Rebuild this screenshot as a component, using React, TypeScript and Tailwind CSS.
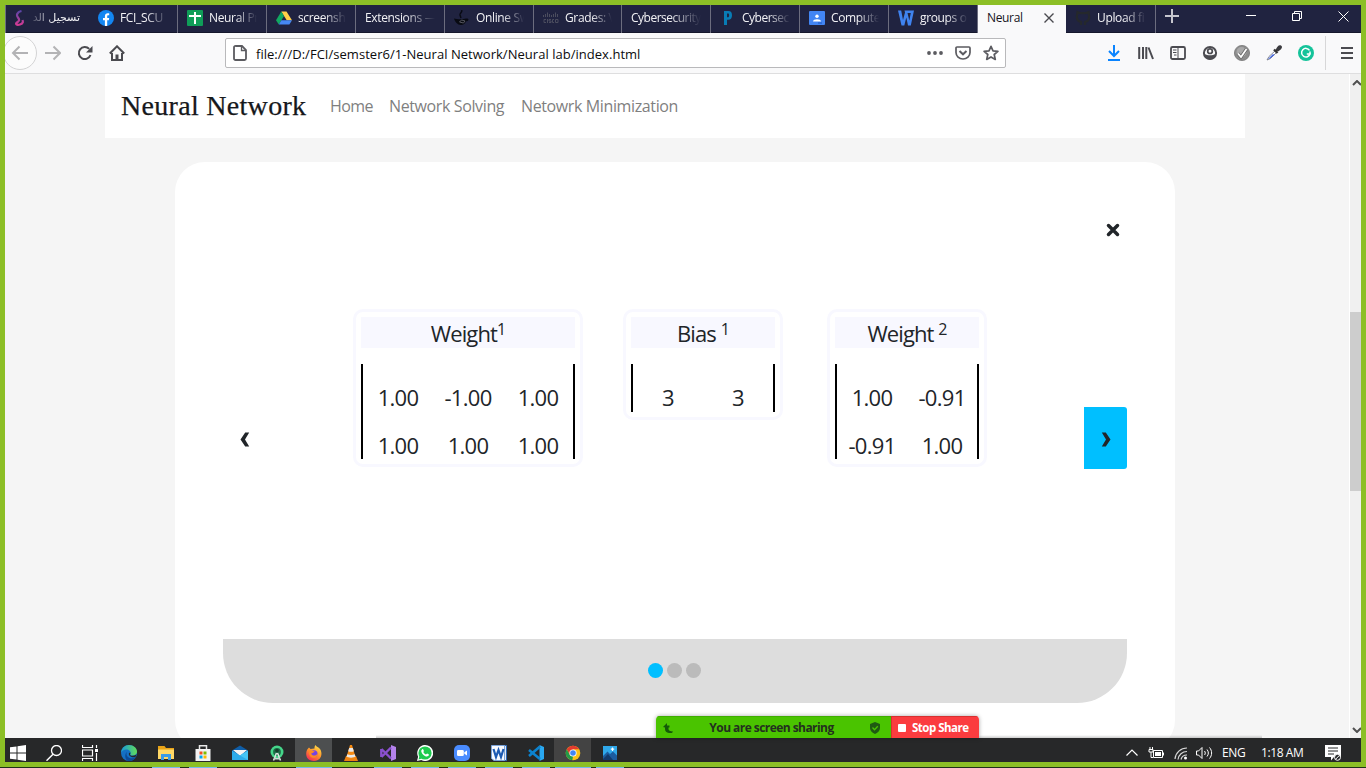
import React from "react";

type Kids = { children?: React.ReactNode };

function Svg({ children, size = 16, box = "0 0 16 16" }: Kids & { size?: number; box?: string }) {
  return (
    <svg width={size} height={size} viewBox={box} fill="none" className="block shrink-0">
      {children}
    </svg>
  );
}

/* ---------- tab strip ---------- */

const tabIcons: Record<string, React.ReactNode> = {
  facebook: (
    <Svg>
      <circle cx="8" cy="8" r="8" fill="#1386f2" />
      <path d="M6.9 16V10.3H5V8h1.9V6.3c0-2 1.1-3 2.8-3 .8 0 1.5.1 1.5.1v1.9h-.9c-.9 0-1.1.5-1.1 1.1V8h2l-.4 2.3H9.2V16z" fill="#fff" />
    </Svg>
  ),
  sheets: (
    <Svg>
      <rect width="16" height="16" rx="1" fill="#0f9d58" />
      <path d="M7 2h2v3h5v2H9v7H7V7H2V5h5z" fill="#fff" />
    </Svg>
  ),
  drive: (
    <Svg>
      <path d="M5.3 1.5h5.2L16 10.3h-5.3z" fill="#ffcf48" />
      <path d="M5.3 1.5 8 6 2.8 14.5 0 10.3z" fill="#11a861" />
      <path d="M5.4 10.3H16l-2.6 4.2H2.8z" fill="#4688f4" />
    </Svg>
  ),
  java: (
    <Svg>
      <path d="M7.500 0c1.500 2-2 3-1.500 5l1 3" stroke="#080a12" strokeWidth="1.400" />
      <path d="M0 8.500c3 1 9 1 12 0 3.500-.5 3 2.500 0 3-1 2-2.500 3.500-5 3.500-3.500 0-6-3-7-6.500z" fill="#080a12" />
      <path d="M5.500 12 7.500 10l3.500 1-1.500 2z" stroke="#5c5d66" strokeWidth=".9" />
    </Svg>
  ),
  cisco: (
    <Svg>
      <path d="M.5 5v2M2.500 4v3M4.500 2.500V7M6.500 4v3M8.500 5v2M10.500 4v3M12.500 2.500V7M14.500 4v3" stroke="#4b4d5e" strokeWidth="1" />
      <path d="M3 9.500H1v3h2M4.500 9v4M8 9.500H6v1.500h2v1.500H6M11 9.500H9.500v3H11M12.500 9.500h2.500v3h-2.500z" stroke="#4b4d5e" strokeWidth="1" />
    </Svg>
  ),
  packet: (
    <Svg>
      <path d="M4 15V1h4.200C11 1 12 2.600 12 5.200S11 9.700 8.200 9.700H7V15zM7 3.500v3.800h.9c.8 0 1.200-.5 1.200-2s-.4-1.800-1.200-1.800z" fill="#087cb5" />
    </Svg>
  ),
  classroom: (
    <Svg>
      <rect y="1" width="16" height="14" rx="1" fill="#4285f4" />
      <circle cx="8" cy="6.300" r="1.700" fill="#fff" />
      <path d="M4 11.500c0-3 8-3 8 0z" fill="#fff" />
      <path d="M9 13h4" stroke="#1a56c0" strokeWidth="1" />
    </Svg>
  ),
  word: (
    <Svg>
      <path d="M0 .5h3.200L5 10 7 2.500 6.500.500H16L12.800 15.500h-2.800L8.300 7.500 6.300 15.500H3.500zM9.500 3l1.800 7.500L12.800 3z" fill="#3f83f0" />
    </Svg>
  ),
  github: (
    <Svg>
      <path d="M6 15v-3C2 11 1.500 8 2 5.500L2.500 2l3 1.200h5l3-1.200.5 3.500c.5 2.500 0 5.500-4 6.500v3" stroke="#25282c" strokeWidth="2.200" />
    </Svg>
  ),
};

function Tab({ label, icon, width = "w-[89px]", tracking = "tracking-[-0.35px]" }: { label: string; icon?: string; width?: string; tracking?: string }) {
  return (
    <div className={`flex h-7 shrink-0 items-center gap-1.5 border-r border-[#6c6d7e] pb-[3px] pl-[9px] pr-[9px] ${width}`}>
      {icon && tabIcons[icon]}
      <span
        className={`min-w-0 flex-1 whitespace-nowrap text-[12px] leading-5 text-[#f2f2f5] [mask-image:linear-gradient(to_right,black_55%,transparent)] ${tracking}`}
      >
        {label}
      </span>
    </div>
  );
}

function TabStrip() {
  return (
    <div className="flex h-7 bg-[#202340] shadow-[inset_0_-1px_0_#15172c]">
      <div dir="rtl" className="flex h-7 w-[84px] shrink-0 items-center border-l border-[#6c6d7e] pb-[3px] pr-[9px]">
        <span className="w-[52px] whitespace-nowrap font-['DejaVu_Sans'] text-[11px] leading-5 text-[#f2f2f5] [mask-image:linear-gradient(to_left,black_50%,transparent)]">
          تسجيل الد
        </span>
        <svg width="12" height="16" viewBox="0 0 12 16" fill="none" className="mr-[3px]">
          <defs>
            <linearGradient id="swirl" x1="0" y1="0" x2="0" y2="1">
              <stop stopColor="#5b45a8" />
              <stop offset="1" stopColor="#d43a93" />
            </linearGradient>
          </defs>
          <path d="M8.500 1C4 2 3 5 5 7.500S6 11 4 12.500 3.500 15.500 7 14.500s3-3 2.500-4.500" stroke="url(#swirl)" strokeWidth="2.200" />
        </svg>
      </div>
      <Tab label="FCI_SCU" icon="facebook" />
      <Tab label="Neural Pr" icon="sheets" />
      <Tab label="screensh" icon="drive" />
      <Tab label="Extensions —" />
      <Tab label="Online Sw" icon="java" />
      <Tab label="Grades: V" icon="cisco" width="w-[88px]" />
      <Tab label="Cybersecurity" tracking="tracking-[-0.5px]" />
      <Tab label="Cybersec" icon="packet" tracking="tracking-[-0.5px]" />
      <Tab label="Compute" icon="classroom" />
      <Tab label="groups o" icon="word" />
      <div className="flex h-7 w-[88px] shrink-0 items-center justify-between bg-[#f9f9fa] pb-[3px] pl-[9px] pr-3">
        <span className="text-[12px] leading-5 tracking-[-0.35px] text-[#15151c]">Neural</span>
        <svg width="10" height="10" viewBox="0 0 10 10" stroke="#4a4a4f" strokeWidth="1.400">
          <path d="M.5.500l9 9M9.500.500l-9 9" />
        </svg>
      </div>
      <Tab label="Upload fi" icon="github" width="w-[90px]" />
      <div className="flex h-[22px] flex-1 items-center justify-between pl-[9px] pr-[12px]">
        <svg width="14" height="14" viewBox="0 0 14 14" stroke="#c6c6ce" strokeWidth="2">
          <path d="M7 0v14M0 7h14" />
        </svg>
        <div className="flex items-center gap-9">
          <svg width="10" height="10" viewBox="0 0 10 10" stroke="#fff">
            <path d="M0 4.500h10" />
          </svg>
          <svg width="10" height="10" viewBox="0 0 10 10" stroke="#fff" fill="none">
            <path d="M.5 2.500h7v7h-7zM2.500 2.500v-2h7v7h-2" />
          </svg>
          <svg width="11" height="11" viewBox="0 0 11 11" stroke="#fff">
            <path d="M.5.500l10 10M10.500.500l-10 10" />
          </svg>
        </div>
      </div>
    </div>
  );
}

/* ---------- toolbar ---------- */

function Cell({ children, w = "w-8" }: Kids & { w?: string }) {
  return <div className={`flex h-full shrink-0 items-center justify-center ${w}`}>{children}</div>;
}

function Toolbar() {
  return (
    <div className="flex h-[41px] items-center border-b border-[#dededf] bg-[#f9f9fa]">
      <div className="flex h-10 w-8 shrink-0 items-center overflow-hidden">
        <svg width="32" height="36" viewBox="0 0 32 36" fill="none">
          <circle cx="15" cy="18" r="16.500" fill="#fcfcfc" stroke="#d3d3d4" />
          <path d="M23 18H8M14.500 11.500 8 18l6.500 6.500" stroke="#b3b3b5" strokeWidth="2" />
        </svg>
      </div>
      <Cell>
        <Svg>
          <path d="M0 8h15M8.500 1.500 15 8l-6.500 6.500" stroke="#b3b3b5" strokeWidth="2" />
        </Svg>
      </Cell>
      <Cell>
        <Svg>
          <path d="M13.500 10A6 6 0 1 1 12.200 3.900" stroke="#4b4b50" strokeWidth="2" />
          <path d="M15.500 1v6.500H9z" fill="#4b4b50" />
        </Svg>
      </Cell>
      <Cell>
        <Svg>
          <path d="M.8 8.500 8 1.300l7.200 7.200" stroke="#4b4b50" strokeWidth="2" />
          <path d="M3 8v7h10V8" stroke="#4b4b50" strokeWidth="2" />
          <path d="M6.500 15V9.500h3V15z" fill="#4b4b50" />
        </Svg>
      </Cell>
      <div className="ml-[92px] flex h-[30px] w-[781px] shrink-0 items-center rounded-[2px] border border-[#b9b9bb] bg-white">
        <div className="flex w-[30px] justify-center pr-0.5">
          <svg width="14" height="16" viewBox="0 0 14 16" fill="none" stroke="#5b5b60" strokeWidth="1.800">
            <path d="M3 1h6l4 4v8.500a1.500 1.500 0 0 1-1.500 1.500h-9A1.500 1.500 0 0 1 1 13.500V2.500A1.500 1.500 0 0 1 3 1z" />
            <path d="M8.500 1v4.500H13" strokeWidth="1.300" />
          </svg>
        </div>
        <span className="flex-1 whitespace-nowrap pt-[3px] text-[13px] tracking-[0.03px] text-[#0c0c0d]">
          file:///D:/FCI/semster6/1-Neural Network/Neural lab/index.html
        </span>
        <Cell w="w-7">
          <Svg>
            <g fill="#5b5b60">
              <circle cx="2" cy="8" r="1.900" />
              <circle cx="8" cy="8" r="1.900" />
              <circle cx="14" cy="8" r="1.900" />
            </g>
          </Svg>
        </Cell>
        <Cell w="w-7">
          <Svg>
            <path d="M2 2h12a1 1 0 0 1 1 1v4.500a7 6.500 0 0 1-14 0V3a1 1 0 0 1 1-1z" stroke="#5b5b60" strokeWidth="1.700" />
            <path d="M4.500 6 8 9.300 11.500 6" stroke="#5b5b60" strokeWidth="2" />
          </Svg>
        </Cell>
        <Cell w="w-7">
          <Svg>
            <path d="M8 1.300l2 4.500 4.900.5-3.700 3.200 1.100 4.900L8 11.900l-4.300 2.500 1.100-4.900L1.100 6.300 6 5.800z" stroke="#5b5b60" strokeWidth="1.700" strokeLinejoin="round" />
          </Svg>
        </Cell>
      </div>
      <div className="ml-[92px] flex h-full items-center">
        <Cell>
          <Svg>
            <path d="M8 0v11M3 6l5 5 5-5M2 15h12" stroke="#0a84ff" strokeWidth="2" />
          </Svg>
        </Cell>
        <Cell>
          <Svg>
            <path d="M1.200 2v12M5 2v12M8.300 2v12M10.500 2.500l4.500 11.500" stroke="#4b4b50" strokeWidth="2" />
          </Svg>
        </Cell>
        <Cell>
          <Svg>
            <rect x="1" y="2" width="14" height="12" rx="1.500" stroke="#4b4b50" strokeWidth="1.800" />
            <path d="M8 2v12M3 5h3.500M3 7.500h3.500M4 10h2.500" stroke="#4b4b50" strokeWidth="1" />
          </Svg>
        </Cell>
        <Cell>
          <Svg>
            <circle cx="8" cy="8" r="6.100" stroke="#4b4b50" strokeWidth="2" />
            <circle cx="8" cy="6.200" r="2.300" fill="#f9f9fa" stroke="#4b4b50" strokeWidth="1.700" />
            <path d="M2.500 9c3 1.800 8 1.800 11 0-.5 3.500-3 5.500-5.500 5.500S3 12.500 2.500 9z" fill="#4b4b50" />
          </Svg>
        </Cell>
        <Cell>
          <Svg>
            <circle cx="8" cy="8" r="7.600" fill="#8c8c8c" stroke="#777" strokeWidth=".8" />
            <circle cx="7.500" cy="7" r="5" fill="#a9a9a9" />
            <path d="M4 8.500 7 12l5.500-8" stroke="#686868" strokeWidth="3.300" />
            <path d="M4 8.500 7 12l5.500-8" stroke="#fff" strokeWidth="1.700" />
          </Svg>
        </Cell>
        <Cell>
          <Svg>
            <path d="M1 15l2-3.500 6.500-6 1.500 1.500-6.500 6.500z" fill="#fff" stroke="#777c8c" strokeWidth=".9" />
            <path d="M2 14l5-5 1.500 1L4 13.500z" fill="#4668e0" />
            <path d="M8 4.500 11.500 8M10.500 5.500l2.500-2.500" stroke="#333" strokeWidth="2.400" />
            <path d="M10 4.500c1-3 3-5 5-4s1 4-3 6z" fill="#3a3a3e" />
          </Svg>
        </Cell>
        <Cell>
          <Svg>
            <circle cx="8" cy="8" r="8" fill="#15c39a" />
            <path d="M11.500 5.300A4.300 4.300 0 1 0 12 9H8.800M12 6.500V9.700" stroke="#fff" strokeWidth="1.500" />
          </Svg>
        </Cell>
      </div>
      <div className="ml-[3px] h-[34px] w-px bg-[#d7d7d8]" />
      <div className="flex flex-1 justify-center pl-[7px]">
        <svg width="12" height="12" viewBox="0 0 12 12" stroke="#4b4b50" strokeWidth="2">
          <path d="M0 1h12M0 6h12M0 11h12" />
        </svg>
      </div>
    </div>
  );
}

/* ---------- page ---------- */

function Matrix({ title, sup, rows, className = "" }: { title: string; sup: string; rows: string[][]; className?: string }) {
  return (
    <section className={`shrink-0 rounded-[10px] border-[3px] border-[#f8f8ff] p-[5px] text-[22px] text-[#212529] ${className}`}>
      <h2 className="h-[31px] whitespace-pre bg-[#f8f8ff] text-center text-[22px] leading-[33px] tracking-[-0.9px]">
        {title}
        <sup className="relative top-[-7px] align-baseline text-[16px] leading-none">{sup}</sup>
      </h2>
      <div className="mt-4 border-x-2 border-black">
        {rows.map((row, i) => (
          <div key={i} className={`flex pt-[15px] ${i === 1 ? "h-[47px]" : "h-12"}`}>
            {row.map((v, j) => (
              <span key={j} className="w-[70px] text-center leading-9 tracking-[-0.7px]">
                {v}
              </span>
            ))}
          </div>
        ))}
      </div>
    </section>
  );
}

function Page() {
  return (
    <main className="flex h-[664px] w-[1344px] flex-col items-center overflow-hidden bg-[#f5f5f5] pr-[4px]">
      <nav className="flex h-16 w-[1140px] shrink-0 items-center bg-white pl-4 text-[16px] text-[#7f7f7f]">
        <span className="w-[209px] whitespace-nowrap font-['Liberation_Serif',serif] text-[28px] tracking-[0.3px] text-[#16181b] [-webkit-text-stroke:0.25px_#16181b]">
          Neural Network
        </span>
        <span className="w-[59px] whitespace-nowrap tracking-[-0.6px]">Home</span>
        <span className="w-[132px] whitespace-nowrap tracking-[-0.38px]">Network Solving</span>
        <span className="whitespace-nowrap tracking-[-0.38px]">Netowrk Minimization</span>
      </nav>
      <div className="mt-6 flex h-[588px] w-[1000px] shrink-0 flex-col rounded-[30px] bg-white p-12">
        <div className="flex h-10 shrink-0 items-center justify-end pr-[7px]">
          <svg width="14" height="14" viewBox="0 0 14 14" stroke="#212529" strokeWidth="3.500" strokeLinecap="round">
            <path d="M2.500 2.500l9 9M11.500 2.500l-9 9" />
          </svg>
        </div>
        <div className="flex h-[389px] shrink-0 items-start">
          <button className="mt-[157px] flex h-[62px] w-[43px] items-center justify-center pt-0.5">
            <svg width="10" height="15" viewBox="0 0 10 15" fill="#212529">
              <path d="M5.200 0.500h4L5 7.500l4.200 7h-4L.5 7.500z" />
            </svg>
          </button>
          <div className="ml-[87px] mt-[59px] flex items-start">
            <Matrix title="Weight" sup="1" rows={[["1.00", "-1.00", "1.00"], ["1.00", "1.00", "1.00"]]} />
            <Matrix className="ml-10" title="Bias " sup="1" rows={[["3", "3"]]} />
            <Matrix className="ml-11" title="Weight " sup="2" rows={[["1.00", "-0.91"], ["-0.91", "1.00"]]} />
          </div>
          <button className="ml-auto mt-[157px] flex h-[62px] w-[43px] items-center justify-center rounded-r-[3px] bg-[#00bfff] pt-0.5">
            <svg width="10" height="15" viewBox="0 0 10 15" fill="#212529">
              <path d="M4.800 0.500h-4L5 7.500l-4.200 7h4l4.700-7z" />
            </svg>
          </button>
        </div>
        <div className="flex h-16 shrink-0 justify-center gap-1 rounded-b-[50px] bg-[#ddd] pr-0.5 pt-6">
          <span className="h-[15px] w-[15px] rounded-full bg-[#00bfff]" />
          <span className="h-[15px] w-[15px] rounded-full bg-[#bbb]" />
          <span className="h-[15px] w-[15px] rounded-full bg-[#bbb]" />
        </div>
      </div>
    </main>
  );
}

function Scrollbar() {
  return (
    <div className="flex w-3 flex-col items-end border-l border-white bg-[#f0f0f0]">
      <svg width="9" height="6" viewBox="0 0 9 6" fill="none" stroke="#505050" strokeWidth="2" className="mt-[6px]">
        <path d="M1 5l4-4 4 4" />
      </svg>
      <div className="mt-[226px] h-[179px] w-full bg-[#cdcdcd]" />
      <svg width="9" height="6" viewBox="0 0 9 6" fill="none" stroke="#505050" strokeWidth="2" className="mb-[5px] mt-auto">
        <path d="M1 1l4 4 4-4" />
      </svg>
    </div>
  );
}

function ShareBar() {
  return (
    <div className="absolute left-[656px] top-[716px] flex h-[22px] w-[323px] overflow-hidden rounded-t-[4px] text-[12px] font-bold shadow-[0_0_4px_rgba(0,0,0,0.35)]">
      <div className="flex w-[235px] items-center justify-between border-t border-[#3fae00] bg-[#4ac400] pl-[7px] pr-[11px] text-[#23301f]">
        <svg width="10" height="10" viewBox="0 0 10 10" fill="none">
          <path d="M0 4 4 0v2.500h2.500v2H5.500v1.500c0 1.500 1.500 2.200 4.500 2.500L9 10C4.500 10.500 2 9 2 6V4.500z" fill="#145a08" />
        </svg>
        <span className="whitespace-nowrap pt-px tracking-[-0.55px]">You are screen sharing</span>
        <svg width="10" height="12" viewBox="0 0 10 12" fill="none">
          <path d="M5 0l5 2v4c0 3-2.500 5-5 6-2.500-1-5-3-5-6V2z" fill="#1f5a12" />
          <path d="M2.500 5.500l2 2.200 3.300-3.500" stroke="#4ac400" strokeWidth="1.300" />
        </svg>
      </div>
      <div className="flex flex-1 items-center gap-[6px] border-l border-t border-[#d83030] bg-[#fb3c3f] pl-[6px] text-white">
        <span className="h-2 w-2 shrink-0 rounded-[1px] bg-white" />
        <span className="whitespace-nowrap text-[11.500px] tracking-[-0.5px]">Stop Share</span>
      </div>
    </div>
  );
}

/* ---------- taskbar ---------- */

const apps: { name: string; bg?: string; art: React.ReactNode }[] = [
  {
    name: "edge",
    art: (
      <Svg>
        <defs>
          <linearGradient id="edgeTop" x1="0" y1="0" x2="1" y2="0">
            <stop stopColor="#189bd9" />
            <stop offset="1" stopColor="#62dc58" />
          </linearGradient>
        </defs>
        <circle cx="8" cy="8" r="8" fill="#1470c4" />
        <path d="M0 7.500C.5 3 4 0 8 0c4.500 0 8 3 8 6.500 0 3-2.500 4-4.500 4-1.500 0-2.500-.5-2-1.500C11 5 3.500 2 0 7.500z" fill="url(#edgeTop)" />
        <path d="M6 7c-2 4 2 8 9 5.500-1 1-3 3.500-7 3.500C4 16 3 9 6 7z" fill="#0c4a97" />
        <path d="M9.300 7.500c.5 1-.8 1.500 0 2.700 1.300 1 4 .8 6-.6l-.8 2.500C11 13 7 11 8 8z" fill="#262829" />
      </Svg>
    ),
  },
  {
    name: "explorer",
    art: (
      <Svg>
        <path d="M0 1h6.500L8 3h8v5H0z" fill="#e8a317" />
        <path d="M0 4.500h16V14H0z" fill="#ffd866" />
        <path d="M3 15V9h10v6h-3v-3H6v3z" fill="#3a9be6" />
      </Svg>
    ),
  },
  {
    name: "store",
    art: (
      <Svg>
        <path d="M4.500 4V.8h7V4" stroke="#e8e8e8" strokeWidth="1.500" />
        <path d="M.5 4h15v12H.5z" fill="#f3f3f3" />
        <path d="M4.500 6.500h3v3h-3z" fill="#f25022" />
        <path d="M8.500 6.500h3v3h-3z" fill="#7fba00" />
        <path d="M4.500 10.500h3v3h-3z" fill="#00a4ef" />
        <path d="M8.500 10.500h3v3h-3z" fill="#ffb900" />
      </Svg>
    ),
  },
  {
    name: "mail",
    art: (
      <Svg>
        <path d="M0 5.500 8 .5l8 5V15H0z" fill="#0f5ea8" />
        <path d="M1 5h14L8 11z" fill="#f4f4f4" />
        <path d="M0 5.500l8 5 8-5V15H0z" fill="#2cabea" />
        <path d="M8 10.500l8-5V15z" fill="#45c5f5" />
      </Svg>
    ),
  },
  {
    name: "android-studio",
    art: (
      <Svg>
        <circle cx="8" cy="7" r="6.500" fill="#45d68a" />
        <circle cx="8" cy="7" r="3.900" fill="#1d6b47" />
        <circle cx="8" cy="5.500" r="1.800" fill="#153c2b" />
        <path d="M7.500 8 4.500 15.500M8.500 8l3 7.500" stroke="#dfe6e2" strokeWidth="1.500" />
        <path d="M5 12c2 1.300 4 1.300 6 0v2.500H5z" fill="#c9dcd2" />
      </Svg>
    ),
  },
  {
    name: "firefox",
    bg: "bg-[#4d4f50]",
    art: (
      <Svg>
        <defs>
          <linearGradient id="fox" x1=".8" y1="0" x2=".2" y2="1">
            <stop stopColor="#ffe14a" />
            <stop offset=".5" stopColor="#ff9029" />
            <stop offset="1" stopColor="#f5245c" />
          </linearGradient>
        </defs>
        <path d="M3 2.500 4.500 4l4-.5c-.2-1.500.3-2.700 1-3.500 1 2 3 2 4.500 4C17 8.500 15.500 16 8 16S-1 9.500 1 5c.3-.8 1-1.300 2-2.500z" fill="url(#fox)" />
        <circle cx="8" cy="8.800" r="3.500" fill="#7542e5" />
        <path d="M3 6c2-1.500 4 0 6 .8-1.500 0-2 2-4 1.500 1 3 5 3 6.500.5.500 2-2 4.500-4.500 4C3.500 12 2.500 8.500 3 6z" fill="#ff8a24" />
      </Svg>
    ),
  },
  {
    name: "vlc",
    art: (
      <Svg>
        <path d="M3 11h10l2 5H1z" fill="#ee8311" />
        <path d="M7 0h2l3.700 12.500C11 14 5 14 3.300 12.500z" fill="#f58a12" />
        <path d="M6.200 3h3.600l1 3.300c-1 .7-4.600.7-5.600 0zM4.300 9.200c2 1 5.400 1 7.400 0l.8 2.400c-2 1.500-7 1.500-9 0z" fill="#e9e9e9" />
      </Svg>
    ),
  },
  {
    name: "visual-studio",
    art: (
      <Svg>
        <path d="M11 0l5 2v12l-5 2z" fill="#b483eb" />
        <path d="M1.500 4 11 13.500M1.500 12 11 2.500M1.300 4v8" stroke="#8a50cf" strokeWidth="2.400" />
      </Svg>
    ),
  },
  {
    name: "whatsapp",
    art: (
      <Svg>
        <path d="M0 16l1.100-4.300A8 8 0 1 1 4.300 15z" fill="#fff" />
        <circle cx="8" cy="8" r="6.600" fill="#1fcb4f" />
        <path d="M1.500 14.500l1-3.500 2.500 2.500z" fill="#1fcb4f" />
        <path d="M5.300 4.200c.5-.4 1 0 1.600 1.700 0 .5-.6.900-.6 1.200.5 1.200 1.500 2 2.600 2.500.4 0 .8-1 1.200-1 1.700.7 2 .9 1.700 1.700-.4 1-1.800 1.500-3.500.9C6.500 10.500 3.500 7 4.400 5.200z" fill="#fff" />
      </Svg>
    ),
  },
  {
    name: "zoom",
    art: (
      <Svg>
        <rect width="16" height="16" rx="5" fill="#4a8cff" />
        <rect x="3" y="5" width="6.800" height="6" rx="1.300" fill="#fff" />
        <path d="M10.300 7.200 13 5.400v5.200l-2.700-1.800z" fill="#fff" />
      </Svg>
    ),
  },
  {
    name: "winword",
    art: (
      <Svg>
        <path d="M5 .5h10.500v15H5z" fill="#dfe9f7" stroke="#2a66b5" />
        <path d="M.5.500h13v15H3l-2.500-2z" fill="#f7faff" stroke="#7ba3d8" />
        <path d="M2.500 4 5 12l2.500-7L10 12l2.500-8" stroke="#1d5bb3" strokeWidth="2.200" />
      </Svg>
    ),
  },
  {
    name: "vscode",
    art: (
      <Svg>
        <path d="M11.500 0 16 2v12l-4.500 2z" fill="#2aa9f2" />
        <path d="M1 5l11 9M1 11l11-9.500" stroke="#0c83cf" strokeWidth="2.600" />
      </Svg>
    ),
  },
  {
    name: "chrome",
    bg: "bg-[#434343]",
    art: (
      <Svg>
        <circle cx="8" cy="8" r="7.300" fill="#fbc116" />
        <path d="M1.700 4.300A7.300 7.300 0 0 1 14.300 4.300H8L4.800 9.800z" fill="#e33b2e" />
        <path d="M1.700 4.300 4.800 9.800 8 11.600 7.300 15.300A7.300 7.300 0 0 1 1.700 4.300z" fill="#229a48" />
        <circle cx="8" cy="8" r="3.600" fill="#fff" />
        <circle cx="8" cy="8" r="2.800" fill="#4285f4" />
      </Svg>
    ),
  },
  {
    name: "photos",
    art: (
      <Svg>
        <path d="M1 1h14v14H1z" fill="#2fa8ea" />
        <path d="M1 11l4.500-4.500L8 9l3-2.500 4 4V15H1z" fill="#1c5c9f" />
        <path d="M1 14l5-5 5 6H1z" fill="#123a6b" />
        <path d="M10.500 2.500v3.500M8.800 4.200h3.400" stroke="#fff" strokeWidth="1.200" />
      </Svg>
    ),
  },
];

const marks = [
  ["ml-[147px]", "w-[28px]"],
  ["ml-[9px]", "w-[28px]"],
  ["ml-[79px]", "w-[36px]"],
  ["ml-[42px]", "w-[28px]"],
  ["ml-[9px]", "w-[28px]"],
  ["ml-[9px]", "w-[28px]"],
  ["ml-[9px]", "w-[28px]"],
  ["ml-[9px]", "w-[28px]"],
  ["ml-[5px]", "w-[36px]"],
  ["ml-[5px]", "w-[28px]"],
];

function Taskbar() {
  return (
    <div className="flex h-6 bg-[#272829] text-white">
      <div className="flex w-[31px] items-center pl-[5px] pt-[6px]">
        <Svg>
          <path d="M0 2.300 6.500 1.400v6H0zM7.500 1.300 16 0v7.400H7.500zM0 8.500h6.500v6.100L0 13.700zM7.500 8.500H16V16l-8.500-1.200z" fill="#fff" />
        </Svg>
      </div>
      <div className="flex w-9 items-center justify-center pt-[6px]">
        <Svg>
          <circle cx="10.500" cy="5.500" r="5" stroke="#fff" strokeWidth="1.300" />
          <path d="M7 9.200.5 15.700" stroke="#fff" strokeWidth="1.500" />
        </Svg>
      </div>
      <div className="flex w-9 items-center justify-center pt-[6px]">
        <Svg>
          <path d="M.5 0v2.500h10V0M.5 5h10v6H.5zM.5 16v-2.500h10V16M14.500 0v3M14.500 8v8" stroke="#fff" strokeWidth="1.200" />
          <path d="M13 4h3v3h-3z" fill="#fff" />
        </Svg>
      </div>
      <div className="ml-0.5 flex">
        {apps.map((a) => (
          <div key={a.name} className={`flex w-[37px] items-center justify-center pt-[6px] ${a.bg ?? ""}`}>
            {a.art}
          </div>
        ))}
      </div>
      <div className="ml-auto flex items-center pr-[20px] pt-[6px] text-[12px]">
        <svg width="12" height="8" viewBox="0 0 12 8" fill="none" stroke="#fff" strokeWidth="1.200">
          <path d="M.5 6.500 6 1l5.500 5.500" />
        </svg>
        <svg width="16" height="12" viewBox="0 0 16 12" fill="none" stroke="#fff" className="ml-[10px]">
          <path d="M5.500 3.500h9v7h-9zM15.500 5.500v3M1 2.500h4v2.500H1zM2 0v2.500M4.500 0v2.500M3 5v5.500h2" />
          <path d="M7 5h6v4H7z" fill="#fff" stroke="none" />
        </svg>
        <svg width="14" height="14" viewBox="0 0 14 14" fill="none" stroke="#d8d8d8" className="ml-[10px]">
          <path d="M1 13A12 12 0 0 1 13 2M4 13.500A9 9 0 0 1 13 5.500M7 13.500a6 6 0 0 1 6-4.500" strokeWidth="1.200" />
          <circle cx="11.500" cy="12" r="1.500" fill="#fff" stroke="none" />
        </svg>
        <svg width="17" height="14" viewBox="0 0 17 14" fill="none" stroke="#fff" className="ml-[8px]">
          <path d="M.5 5h2L6 1.500v11L2.500 9h-2zM8.500 5c1 1.200 1 3 0 4M11 3.500c1.800 2 1.800 5 0 7M13.500 1.500c2.800 3 2.800 8 0 11" />
        </svg>
        <span className="ml-[9px] w-[39px] tracking-[-0.3px]">ENG</span>
        <span className="w-[64px] whitespace-nowrap tracking-[-0.4px]">1:18 AM</span>
        <svg width="16" height="16" viewBox="0 0 16 16" fill="none">
          <path d="M0 0h16v12H9l-3 3.500V12H0z" fill="#fff" />
          <path d="M3 3h10M3 6h10M3 9h6" stroke="#262829" />
          <circle cx="12.500" cy="12.300" r="3" fill="#262829" stroke="#fff" />
          <path d="M10.500 14.300l4-4" stroke="#fff" />
        </svg>
      </div>
    </div>
  );
}

export default function App() {
  return (
    <div className="relative h-[768px] w-[1366px] overflow-hidden bg-[#8cbf26] font-['Open_Sans',sans-serif]">
      <div className="flex h-[767px] flex-col px-[5px] pb-[5px] pt-[5px]">
        <TabStrip />
        <Toolbar />
        <div className="flex h-[664px] shrink-0">
          <Page />
          <Scrollbar />
        </div>
        <Taskbar />
      </div>
      <div className="flex h-px bg-[#20301a] pl-[5px]">
        {marks.map(([gap, w], i) => (
          <span key={i} className={`h-px bg-[#76b9ed] ${gap} ${w}`} />
        ))}
      </div>
      <div className="absolute left-[376px] top-[735px] h-[3px] w-[886px] bg-linear-to-b from-transparent to-black/20" />
      <ShareBar />
    </div>
  );
}
